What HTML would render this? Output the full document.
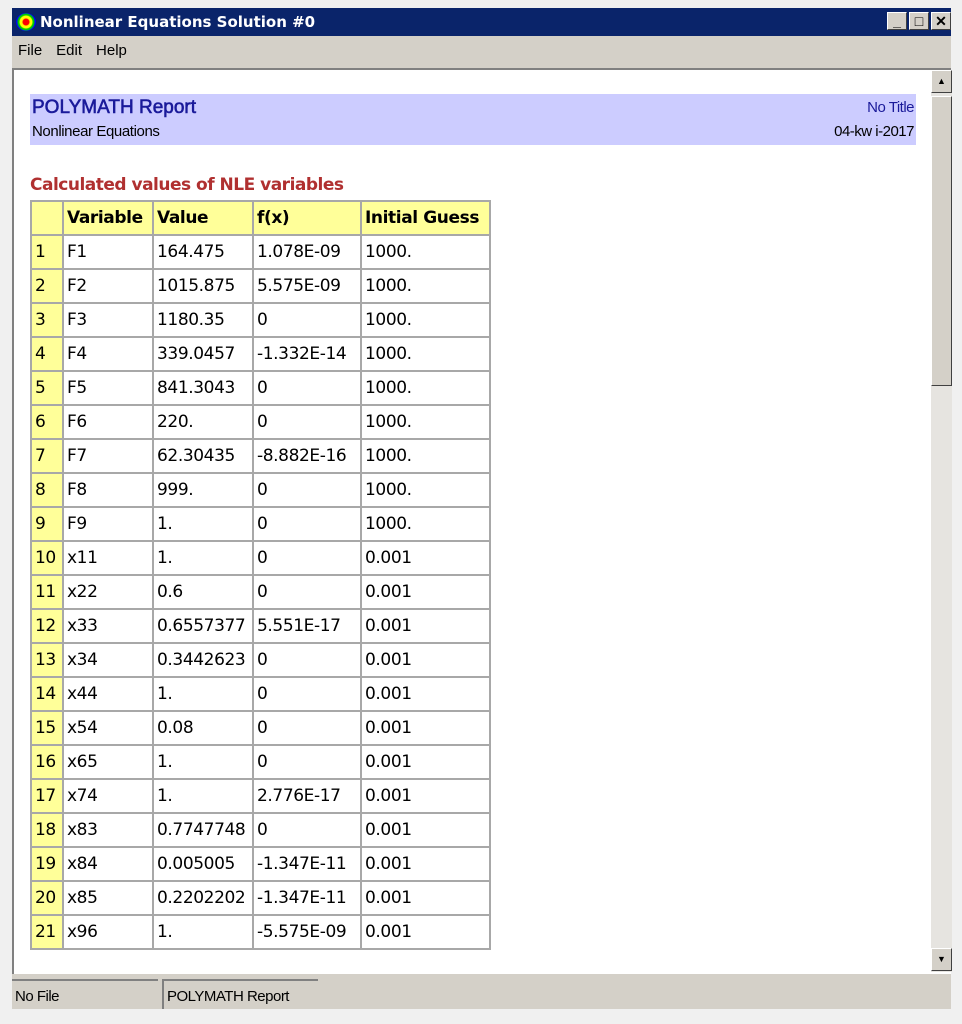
<!DOCTYPE html>
<html><head><meta charset="utf-8"><style>
*{margin:0;padding:0;box-sizing:border-box}
body{width:962px;height:1024px;background:#f0f0f0;position:relative;overflow:hidden;font-family:"Liberation Sans",sans-serif}
.win{position:absolute;left:12px;top:8px;width:939px;height:1001px;background:#d4d0c8}
.title{position:absolute;left:0;top:0;width:939px;height:28px;background:#0a246a;color:#fff;font:bold 15px "DejaVu Sans",sans-serif;line-height:28px;padding-left:28px}
.icon{position:absolute;left:4px;top:5px;width:20px;height:18px;border-radius:50%;background:radial-gradient(circle,#f00 0 3px,#ff0 4px 6px,#0c0 7px 8px,#00f 9px)}
.btns{position:absolute;right:0;top:4px}
.btns span{display:inline-block;width:20px;height:18px;background:#d4d0c8;border:1px solid;border-color:#fff #404040 #404040 #fff;margin-left:2px;color:#000;font:bold 14px "Liberation Sans";text-align:center;line-height:16px;vertical-align:top}
.menu{position:absolute;top:28px;left:0;height:32px;font-size:15px;line-height:30px;padding-left:6px;color:#000}
.menu span{margin-right:14px}
.client{position:absolute;left:0;top:60px;width:939px;height:906px;background:#fff;border-top:2px solid #808080;border-left:2px solid #808080}
.hdr{position:absolute;left:16px;top:24px;width:886px;height:51px;background:#ccccff}
.sb{position:absolute;left:917px;top:0;width:21px;height:902px;background:#e6e4e0}
.sbb{position:absolute;left:0;width:21px;height:23px;background:#d4d0c8;border:1px solid;border-color:#fff #404040 #404040 #fff;font-size:9px;text-align:center;line-height:21px}
table{position:absolute;left:16px;top:130px;border-collapse:collapse;font:17px "DejaVu Sans",sans-serif;color:#000}
td{border:2px solid #a8a8a8;height:34px;padding:0 0 0 3px;white-space:nowrap;letter-spacing:-0.4px}
tr:first-child td{background:#ffff99;font-weight:bold}
td:first-child{background:#ffff99}
.status{position:absolute;top:969px;left:0;height:32px;font-size:15px}
.status div{position:absolute;top:2px;height:30px;border-top:2px solid #808080;line-height:32px;padding-left:3px;letter-spacing:-0.5px}
</style></head><body>
<div class="win">
<div class="title"><div class="icon"></div>Nonlinear Equations Solution #0
<div class="btns"><span>_</span><span>□</span><span>✕</span></div></div>
<div class="menu"><span>File</span><span>Edit</span><span>Help</span></div>
<div class="client">
<div class="hdr">
<div style="position:absolute;left:2px;top:3px;color:#1a1a9a;font:19px 'Liberation Sans';-webkit-text-stroke:.6px #1a1a9a">POLYMATH Report</div>
<div style="position:absolute;left:2px;top:29px;font-size:15px;letter-spacing:-0.4px">Nonlinear Equations</div>
<div style="position:absolute;right:2px;top:5px;color:#1a1a9a;font-size:15px;letter-spacing:-0.5px">No Title</div>
<div style="position:absolute;right:2px;top:29px;font-size:15px;letter-spacing:-0.5px">04-kw i-2017</div>
</div>
<div style="position:absolute;left:16px;top:105px;color:#b03030;font:bold 17px 'DejaVu Sans',sans-serif;letter-spacing:-0.5px">Calculated values of NLE variables</div>
<table>
<col style="width:32px"><col style="width:90px"><col style="width:100px"><col style="width:108px"><col style="width:129px">
<tr><td></td><td>Variable</td><td>Value</td><td>f(x)</td><td>Initial Guess</td></tr>
<tr><td>1</td><td>F1</td><td>164.475</td><td>1.078E-09</td><td>1000.</td></tr>
<tr><td>2</td><td>F2</td><td>1015.875</td><td>5.575E-09</td><td>1000.</td></tr>
<tr><td>3</td><td>F3</td><td>1180.35</td><td>0</td><td>1000.</td></tr>
<tr><td>4</td><td>F4</td><td>339.0457</td><td>-1.332E-14</td><td>1000.</td></tr>
<tr><td>5</td><td>F5</td><td>841.3043</td><td>0</td><td>1000.</td></tr>
<tr><td>6</td><td>F6</td><td>220.</td><td>0</td><td>1000.</td></tr>
<tr><td>7</td><td>F7</td><td>62.30435</td><td>-8.882E-16</td><td>1000.</td></tr>
<tr><td>8</td><td>F8</td><td>999.</td><td>0</td><td>1000.</td></tr>
<tr><td>9</td><td>F9</td><td>1.</td><td>0</td><td>1000.</td></tr>
<tr><td>10</td><td>x11</td><td>1.</td><td>0</td><td>0.001</td></tr>
<tr><td>11</td><td>x22</td><td>0.6</td><td>0</td><td>0.001</td></tr>
<tr><td>12</td><td>x33</td><td>0.6557377</td><td>5.551E-17</td><td>0.001</td></tr>
<tr><td>13</td><td>x34</td><td>0.3442623</td><td>0</td><td>0.001</td></tr>
<tr><td>14</td><td>x44</td><td>1.</td><td>0</td><td>0.001</td></tr>
<tr><td>15</td><td>x54</td><td>0.08</td><td>0</td><td>0.001</td></tr>
<tr><td>16</td><td>x65</td><td>1.</td><td>0</td><td>0.001</td></tr>
<tr><td>17</td><td>x74</td><td>1.</td><td>2.776E-17</td><td>0.001</td></tr>
<tr><td>18</td><td>x83</td><td>0.7747748</td><td>0</td><td>0.001</td></tr>
<tr><td>19</td><td>x84</td><td>0.005005</td><td>-1.347E-11</td><td>0.001</td></tr>
<tr><td>20</td><td>x85</td><td>0.2202202</td><td>-1.347E-11</td><td>0.001</td></tr>
<tr><td>21</td><td>x96</td><td>1.</td><td>-5.575E-09</td><td>0.001</td></tr>
</table>
<div class="sb">
<div class="sbb" style="top:0">▲</div>
<div class="sbb" style="top:26px;height:290px"></div>
<div class="sbb" style="top:878px">▼</div>
</div>
</div>
<div class="status">
<div style="left:0;width:146px">No File</div>
<div style="left:150px;width:156px;border-left:2px solid #808080">POLYMATH Report</div>
</div>
</div>
</body></html>
